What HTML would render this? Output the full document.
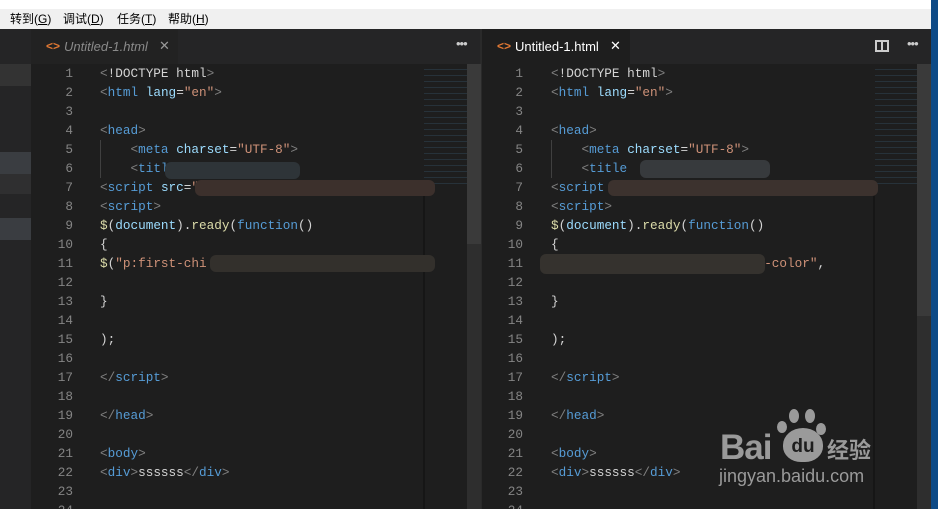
<!DOCTYPE html>
<html><head><meta charset="utf-8"><style>
*{margin:0;padding:0;box-sizing:border-box}
html,body{width:938px;height:509px;overflow:hidden}
body{background:#1e1e1e;position:relative;font-family:"Liberation Sans","Noto Sans CJK SC",sans-serif}
.a{position:absolute}
.code{font-family:"Liberation Mono",monospace;font-size:12.7px;line-height:19px;white-space:pre;color:#d4d4d4}
.ln{font-family:"Liberation Mono",monospace;font-size:12.7px;line-height:19px;color:#858585;text-align:right;white-space:pre}
.t{color:#569cd6}.p{color:#808080}.at{color:#9cdcfe}.s{color:#ce9178}.y{color:#dcdcaa}.w{color:#d4d4d4}
.blur{position:absolute;height:14px;border-radius:6px}
</style></head><body>
<div class="a" style="left:0;top:0;width:938px;height:9px;background:#fff"></div>
<div class="a" style="left:0;top:9px;width:931px;height:20px;background:#f0f0f0;font-size:12px;color:#000;line-height:20px">
<span class="a" style="left:10px">转到(<u>G</u>)</span><span class="a" style="left:63px">调试(<u>D</u>)</span><span class="a" style="left:117px">任务(<u>T</u>)</span><span class="a" style="left:168px">帮助(<u>H</u>)</span></div>
<div class="a" style="left:931px;top:0;width:7px;height:509px;background:#0d4a86"></div>
<div class="a" style="left:0;top:29px;width:31px;height:480px;background:#252526"></div>
<div class="a" style="left:0;top:64px;width:31px;height:22px;background:#333"></div>
<div class="a" style="left:0;top:152px;width:31px;height:22px;background:#3a3d41"></div>
<div class="a" style="left:0;top:174px;width:31px;height:20px;background:#2f2f30"></div>
<div class="a" style="left:0;top:218px;width:31px;height:22px;background:#3a3d41"></div>
<div class="a" style="left:31px;top:29px;width:449px;height:35px;background:#252526"></div>
<div class="a" style="left:31px;top:29px;width:147px;height:35px;background:#222"></div>
<div class="a" style="left:46px;top:39px;font-size:12px;color:#e37933;font-weight:bold">&lt;&gt;</div>
<div class="a" style="left:64px;top:39px;font-size:13px;color:#8a8a8a;font-style:italic">Untitled-1.html</div>
<div class="a" style="left:159px;top:38px;font-size:13px;color:#999">✕</div>
<div class="a" style="left:456px;top:36px;font-size:13px;color:#ccc;letter-spacing:-1px">•••</div>
<div class="a" style="left:480px;top:29px;width:2px;height:480px;background:#2a2a2a"></div>
<div class="a" style="left:482px;top:29px;width:449px;height:35px;background:#252526"></div>
<div class="a" style="left:482px;top:29px;width:148px;height:35px;background:#1e1e1e"></div>
<div class="a" style="left:497px;top:39px;font-size:12px;color:#e37933;font-weight:bold">&lt;&gt;</div>
<div class="a" style="left:515px;top:39px;font-size:13px;color:#fff">Untitled-1.html</div>
<div class="a" style="left:610px;top:38px;font-size:13px;color:#fff">✕</div>
<div class="a" style="left:875px;top:40px;width:14px;height:12px;border:2px solid #ccc"></div>
<div class="a" style="left:881px;top:40px;width:2px;height:12px;background:#ccc"></div>
<div class="a" style="left:907px;top:36px;font-size:13px;color:#ccc;letter-spacing:-1px">•••</div>
<div class="a" style="left:424px;top:64px;width:43px;height:120px;opacity:.3;background:repeating-linear-gradient(#1e1e1e 0 5px,#3b5f7a 5px 6px)"></div>
<div class="a" style="left:467px;top:64px;width:14px;height:445px;background:#2e2e2e"></div>
<div class="a" style="left:467px;top:64px;width:14px;height:180px;background:#3a3a3a"></div>
<div class="a" style="left:875px;top:64px;width:42px;height:120px;opacity:.3;background:repeating-linear-gradient(#1e1e1e 0 5px,#3b5f7a 5px 6px)"></div>
<div class="a" style="left:917px;top:64px;width:14px;height:445px;background:#2e2e2e"></div>
<div class="a" style="left:917px;top:64px;width:14px;height:252px;background:#3a3a3a"></div>
<div class="a" style="left:423px;top:184px;width:2px;height:325px;background:#161616"></div>
<div class="a" style="left:873px;top:184px;width:2px;height:325px;background:#161616"></div>

<div class="a ln" style="left:44px;top:64px;width:29px">1
2
3
4
5
6
7
8
9
10
11
12
13
14
15
16
17
18
19
20
21
22
23
24</div>
<div class="a code" style="left:100px;top:64px"><span class="p">&lt;</span><span class="w">!DOCTYPE html</span><span class="p">&gt;</span>
<span class="p">&lt;</span><span class="t">html</span> <span class="at">lang</span>=<span class="s">"en"</span><span class="p">&gt;</span>

<span class="p">&lt;</span><span class="t">head</span><span class="p">&gt;</span>
    <span class="p">&lt;</span><span class="t">meta</span> <span class="at">charset</span>=<span class="s">"UTF-8"</span><span class="p">&gt;</span>
    <span class="p">&lt;</span><span class="t">titl</span>
<span class="p">&lt;</span><span class="t">script</span> <span class="at">src</span>=<span class="s">"</span>
<span class="p">&lt;</span><span class="t">script</span><span class="p">&gt;</span>
<span class="y">$</span>(<span class="at">document</span>).<span class="y">ready</span>(<span class="t">function</span>()
{
<span class="y">$</span>(<span class="s">"p:first-chi</span>

}

);

<span class="p">&lt;/</span><span class="t">script</span><span class="p">&gt;</span>

<span class="p">&lt;/</span><span class="t">head</span><span class="p">&gt;</span>

<span class="p">&lt;</span><span class="t">body</span><span class="p">&gt;</span>
<span class="p">&lt;</span><span class="t">div</span><span class="p">&gt;</span>ssssss<span class="p">&lt;/</span><span class="t">div</span><span class="p">&gt;</span>
</div>
<div class="a ln" style="left:494px;top:64px;width:29px">1
2
3
4
5
6
7
8
9
10
11
12
13
14
15
16
17
18
19
20
21
22
23
24</div>
<div class="a code" style="left:551px;top:64px"><span class="p">&lt;</span><span class="w">!DOCTYPE html</span><span class="p">&gt;</span>
<span class="p">&lt;</span><span class="t">html</span> <span class="at">lang</span>=<span class="s">"en"</span><span class="p">&gt;</span>

<span class="p">&lt;</span><span class="t">head</span><span class="p">&gt;</span>
    <span class="p">&lt;</span><span class="t">meta</span> <span class="at">charset</span>=<span class="s">"UTF-8"</span><span class="p">&gt;</span>
    <span class="p">&lt;</span><span class="t">title</span>
<span class="p">&lt;</span><span class="t">script</span>
<span class="p">&lt;</span><span class="t">script</span><span class="p">&gt;</span>
<span class="y">$</span>(<span class="at">document</span>).<span class="y">ready</span>(<span class="t">function</span>()
{
                        <span class="s">ound-color"</span>,

}

);

<span class="p">&lt;/</span><span class="t">script</span><span class="p">&gt;</span>

<span class="p">&lt;/</span><span class="t">head</span><span class="p">&gt;</span>

<span class="p">&lt;</span><span class="t">body</span><span class="p">&gt;</span>
<span class="p">&lt;</span><span class="t">div</span><span class="p">&gt;</span>ssssss<span class="p">&lt;/</span><span class="t">div</span><span class="p">&gt;</span>
</div>
<div class="a" style="left:100px;top:140px;width:1px;height:38px;background:#404040"></div>
<div class="a" style="left:551px;top:140px;width:1px;height:38px;background:#404040"></div>
<div class="blur" style="left:165px;top:162px;width:135px;height:17px;background:#2e3438"></div>
<div class="blur" style="left:195px;top:180px;width:240px;height:16px;background:#3c302c"></div>
<div class="blur" style="left:210px;top:255px;width:225px;height:17px;background:#33302c"></div>
<div class="blur" style="left:640px;top:160px;width:130px;height:18px;background:#373a3d"></div>
<div class="blur" style="left:608px;top:180px;width:270px;height:16px;background:#3c322e"></div>
<div class="blur" style="left:540px;top:254px;width:225px;height:20px;background:#35322e"></div>
<div class="a" style="left:720px;top:428px;font:bold 35px 'Liberation Sans',sans-serif;color:#9a9a9a;letter-spacing:-1px">Bai</div>
<div class="a" style="left:783px;top:428px;width:40px;height:34px;border-radius:50% 50% 45% 45%;background:#9a9a9a;color:#1e1e1e;font:bold 19px 'Liberation Sans',sans-serif;text-align:center;line-height:38px">du</div>
<div class="a" style="left:777px;top:421px;width:10px;height:12px;border-radius:50%;background:#9a9a9a"></div>
<div class="a" style="left:789px;top:409px;width:10px;height:14px;border-radius:50%;background:#9a9a9a"></div>
<div class="a" style="left:805px;top:409px;width:10px;height:14px;border-radius:50%;background:#9a9a9a"></div>
<div class="a" style="left:816px;top:423px;width:10px;height:12px;border-radius:50%;background:#9a9a9a"></div>
<div class="a" style="left:827px;top:436px;font:bold 22px 'Noto Sans CJK SC',sans-serif;color:#9a9a9a;line-height:26px">经验</div>
<div class="a" style="left:719px;top:466px;font:18px 'Liberation Sans',sans-serif;color:#9a9a9a">jingyan.baidu.com</div>
</body></html>
